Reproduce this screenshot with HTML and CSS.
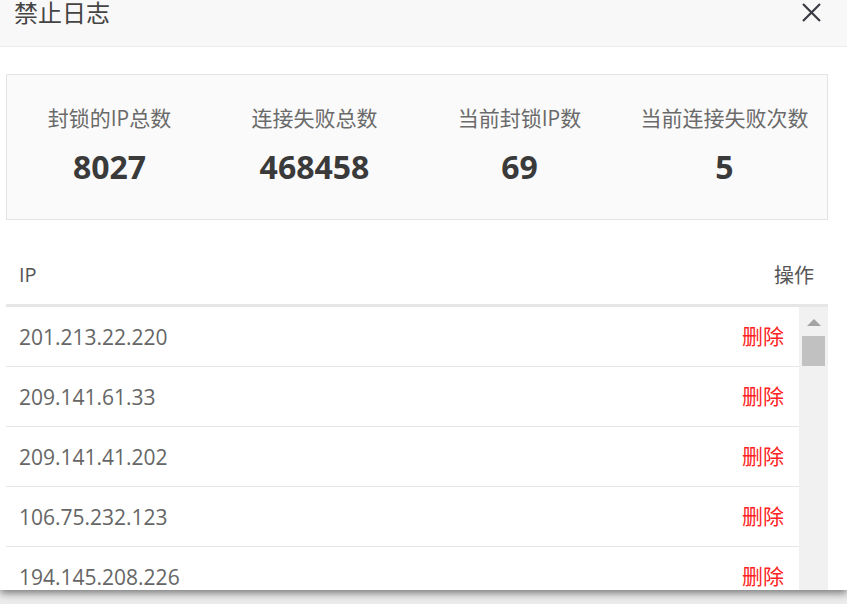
FILE: index.html
```html
<!DOCTYPE html>
<html lang="zh">
<head>
<meta charset="utf-8">
<title>禁止日志</title>
<link rel="stylesheet" href="styles.css">
</head>
<body>
<div class="dialog">
  <div class="header">
    <div class="title">禁止日志</div>
    <svg class="close" width="21" height="21" viewBox="0 0 21 21"><path d="M2 2L19 19M19 2L2 19" stroke="#3a3a44" stroke-width="2.2" fill="none"/></svg>
  </div>
  <div class="content">
    <div class="stats">
      <div class="stat"><div class="label">封锁的IP总数</div><div class="num">8027</div></div>
      <div class="stat"><div class="label">连接失败总数</div><div class="num">468458</div></div>
      <div class="stat"><div class="label">当前封锁IP数</div><div class="num">69</div></div>
      <div class="stat"><div class="label">当前连接失败次数</div><div class="num">5</div></div>
    </div>
    <div class="table">
      <div class="thead">
        <div class="th">IP</div>
        <div class="th">操作</div>
      </div>
      <div class="tbody">
        <div class="rows">
          <div class="row"><span class="ip">201.213.22.220</span><span class="del">删除</span></div>
          <div class="row"><span class="ip">209.141.61.33</span><span class="del">删除</span></div>
          <div class="row"><span class="ip">209.141.41.202</span><span class="del">删除</span></div>
          <div class="row"><span class="ip">106.75.232.123</span><span class="del">删除</span></div>
          <div class="row"><span class="ip">194.145.208.226</span><span class="del">删除</span></div>
        </div>
        <div class="scrollbar">
          <div class="arrow"></div>
          <div class="thumb"></div>
        </div>
      </div>
    </div>
  </div>
</div>
</body>
</html>
```
FILE: styles.css
```css
html, body {
  margin: 0;
  padding: 0;
}
body {
  width: 847px;
  height: 604px;
  overflow: hidden;
  background: #ececec;
  font-family: "Open Sans", "Noto Sans CJK SC", sans-serif;
}
.dialog {
  width: 847px;
  height: 590px;
  background: #fff;
  overflow: hidden;
  box-shadow: 0 3px 8px rgba(0, 0, 0, 0.5);
}
.header {
  height: 46px;
  background: #f8f8f8;
  border-bottom: 1px solid #ececec;
  display: flex;
  justify-content: space-between;
  align-items: flex-start;
  padding: 0 25px 0 14px;
}
.title {
  font-size: 24px;
  line-height: 24px;
  color: #444;
  font-family: "Noto Sans CJK SC", sans-serif;
}
.close {
  margin-top: 2px;
}
.content {
  padding: 27px 19px 0 6px;
}
.stats {
  height: 144px;
  border: 1px solid #e3e3e3;
  background: #fafafa;
  display: grid;
  grid-template-columns: repeat(4, 1fr);
}
.stat {
  display: flex;
  flex-direction: column;
  align-items: center;
  padding-top: 29px;
}
.label {
  font-size: 21px;
  line-height: 28px;
  color: #6a6a6a;
}
.num {
  margin-top: 15px;
  font-size: 32px;
  line-height: 40px;
  font-weight: 700;
  color: #3a3a3a;
}
.table {
  margin-top: 24px;
}
.thead {
  height: 60px;
  border-bottom: 3px solid #e6e6e6;
  display: flex;
  justify-content: space-between;
  align-items: center;
  padding: 0 14px 0 13px;
  font-size: 20px;
  color: #555;
}
.tbody {
  height: 283px;
  display: flex;
  overflow: hidden;
}
.rows {
  flex: 1;
}
.row {
  height: 59px;
  border-bottom: 1px solid #e6e6e6;
  display: flex;
  justify-content: space-between;
  align-items: center;
  padding: 0 15px 0 13px;
  font-size: 21px;
}
.ip {
  color: #666;
}
.del {
  color: #ff2222;
  font-size: 21px;
  line-height: 24px;
  padding-bottom: 4px;
  font-family: "Noto Sans CJK SC", sans-serif;
}
.scrollbar {
  width: 29px;
  background: #f1f1f1;
  display: flex;
  flex-direction: column;
  align-items: center;
}
.arrow {
  width: 0;
  height: 0;
  margin-top: 12px;
  border-left: 7px solid transparent;
  border-right: 7px solid transparent;
  border-bottom: 7px solid #a3a3a3;
}
.thumb {
  width: 23px;
  height: 30px;
  margin-top: 10px;
  background: #c1c1c1;
}
```
